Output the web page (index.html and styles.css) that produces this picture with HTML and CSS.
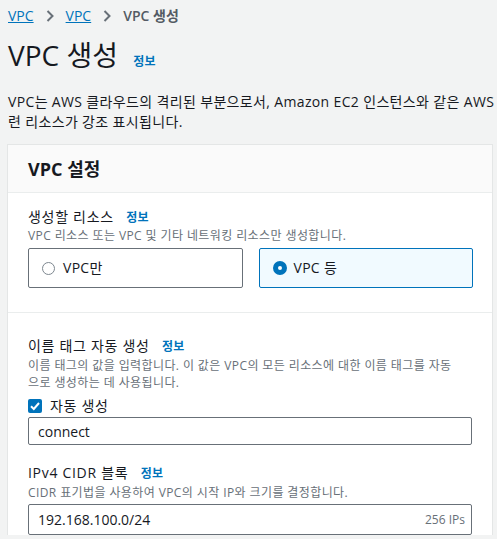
FILE: index.html
```html
<!DOCTYPE html>
<html lang="ko">
<head>
<meta charset="utf-8">
<title>VPC 생성</title>
<link rel="stylesheet" href="styles.css">
</head>
<body>
<div class="page">
  <nav class="crumbs">
    <a class="crumb-link" href="#">VPC</a>
    <svg class="chev" width="8" height="12" viewBox="0 0 8 12"><path d="M1.5 1 L6.5 6 L1.5 11" fill="none" stroke="#687078" stroke-width="2"/></svg>
    <a class="crumb-link" href="#">VPC</a>
    <svg class="chev" width="8" height="12" viewBox="0 0 8 12"><path d="M1.5 1 L6.5 6 L1.5 11" fill="none" stroke="#687078" stroke-width="2"/></svg>
    <span class="crumb-current">VPC 생성</span>
  </nav>

  <h1 class="title">VPC 생성 <a class="info" href="#">정보</a></h1>

  <p class="lead">VPC는 AWS 클라우드의 격리된 부분으로서, Amazon EC2 인스턴스와 같은 AWS<br>련 리소스가 강조 표시됩니다.</p>

  <section class="card">
    <header class="card-head">VPC 설정</header>

    <div class="sec sec-first">
      <div class="label">생성할 리소스 <a class="info" href="#">정보</a></div>
      <div class="desc desc-tight">VPC 리소스 또는 VPC 및 기타 네트워킹 리소스만 생성합니다.</div>
      <div class="tiles">
        <div class="tile">
          <span class="radio"></span>
          <span class="tile-text">VPC만</span>
        </div>
        <div class="tile tile-on">
          <span class="radio radio-on"></span>
          <span class="tile-text">VPC 등</span>
        </div>
      </div>
    </div>

    <div class="sec sec-second">
      <div class="label">이름 태그 자동 생성 <a class="info" href="#">정보</a></div>
      <div class="desc">이름 태그의 값을 입력합니다. 이 값은 VPC의 모든 리소스에 대한 이름 태그를 자동<br>으로 생성하는 데 사용됩니다.</div>
      <div class="check-row">
        <span class="checkbox"><svg width="14" height="14" viewBox="0 0 14 14"><path d="M3 7.2 L5.8 10 L11 4" fill="none" stroke="#fff" stroke-width="2"/></svg></span>
        <span class="check-text">자동 생성</span>
      </div>
      <div class="input input-name">connect</div>

      <div class="label label-gap">IPv4 CIDR 블록 <a class="info" href="#">정보</a></div>
      <div class="desc">CIDR 표기법을 사용하여 VPC의 시작 IP와 크기를 결정합니다.</div>
      <div class="input input-cidr"><span>192.168.100.0/24</span><span class="suffix">256 IPs</span></div>
    </div>
  </section>
</div>
</body>
</html>
```

FILE: styles.css
```css
html, body {
  margin: 0;
  padding: 0;
  overflow: hidden;
}
body {
  background: #f2f3f3;
  font-family: "Open Sans", "Noto Sans CJK KR", sans-serif;
  color: #16191f;
  width: 497px;
  height: 539px;
}
.page {
  padding: 6px 0 0 8px;
}
.crumbs {
  display: flex;
  align-items: center;
  gap: 10px;
  font-size: 14px;
  line-height: 20px;
  height: 20px;
}
.crumb-link {
  color: #0073bb;
  text-decoration: underline;
}
.chev {
  display: block;
  margin: 0 2px;
}
.crumb-current {
  color: #545b64;
  font-weight: 600;
}
.title {
  margin: 11px 0 0 0;
  font-size: 28px;
  line-height: 36px;
  font-weight: 400;
  color: #16191f;
  white-space: nowrap;
}
.info {
  color: #0073bb;
  text-decoration: none;
  font-size: 12px;
  font-weight: 700;
  letter-spacing: 0.3px;
}
.title .info {
  margin-left: 8px;
}
.lead {
  margin: 12px 0 0 0;
  font-size: 14px;
  line-height: 20px;
  white-space: nowrap;
  letter-spacing: 0.35px;
  color: #16191f;
}
.card {
  margin: 12px 0 0 -1px;
  width: 484px;
  background: #fff;
  border: 1px solid #e4e6e6;
  border-bottom: none;
}
.card-head {
  background: #fafafa;
  height: 45px;
  padding: 0 20px 2px 20px;
  border-bottom: 1px solid #eaeded;
  display: flex;
  align-items: center;
  font-size: 18px;
  font-weight: 700;
  color: #16191f;
}
.sec {
  padding: 0 20px;
}
.sec-first {
  padding-top: 14px;
  padding-bottom: 24px;
  border-bottom: 1px solid #eaeded;
}
.sec-second {
  padding-top: 23px;
}
.label {
  font-size: 14px;
  line-height: 20px;
  color: #16191f;
  white-space: nowrap;
  letter-spacing: 0.7px;
}
.label .info {
  margin-left: 8px;
}
.label-gap {
  margin-top: 18px;
}
.desc {
  font-size: 12px;
  line-height: 17px;
  color: #687078;
  white-space: nowrap;
  letter-spacing: 0.4px;
}
.desc-tight {
  line-height: 16px;
}
.tiles {
  display: flex;
  gap: 16px;
  margin-top: 4px;
  width: 445px;
}
.tile {
  flex: 1;
  height: 38px;
  border: 1px solid #687078;
  border-radius: 2px;
  display: flex;
  align-items: center;
  padding-left: 13px;
  gap: 8px;
  font-size: 14px;
}
.tile-on {
  border-color: #0073bb;
  background: #f1faff;
}
.radio {
  width: 11px;
  height: 11px;
  border: 1.5px solid #7d878f;
  border-radius: 50%;
  background: #fff;
  flex: none;
}
.radio-on {
  width: 4px;
  height: 4px;
  border: 5px solid #0073bb;
}
.tile-text {
  color: #16191f;
  line-height: 20px;
  letter-spacing: 0.3px;
}
.tile-on .tile-text {
  margin-left: -1px;
}
.check-row {
  display: flex;
  align-items: center;
  gap: 8px;
  margin-top: 5px;
  height: 20px;
}
.checkbox {
  width: 14px;
  height: 14px;
  background: #0073bb;
  border-radius: 2px;
  display: block;
  flex: none;
}
.checkbox svg {
  display: block;
}
.check-text {
  font-size: 14px;
  line-height: 20px;
  letter-spacing: 0.7px;
}
.input {
  width: 444px;
  box-sizing: border-box;
  border: 1px solid #687078;
  border-radius: 2px;
  background: #fff;
  display: flex;
  align-items: center;
  justify-content: space-between;
  padding: 0 6px 0 9px;
  font-size: 14px;
  color: #16191f;
}
.input-name {
  height: 28px;
  margin-top: 1px;
}
.input-cidr {
  height: 31px;
  margin-top: 3px;
}
.suffix {
  font-size: 12px;
  color: #687078;
}
```
